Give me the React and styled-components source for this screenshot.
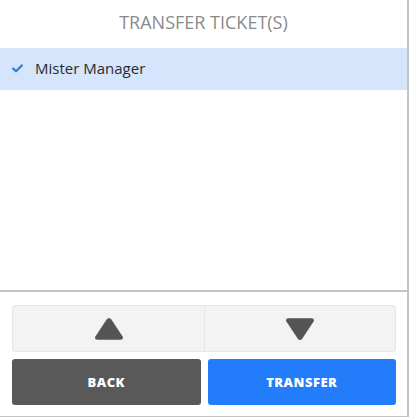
import { styled, createGlobalStyle } from "styled-components";

const GlobalStyle = createGlobalStyle`
   html, body {
      margin: 0;
      padding: 0;
      background: #fff;
   }
   * {
      box-sizing: border-box;
   }
`;

const Panel = styled.div`
   width: 409px;
   height: 417px;
   display: flex;
   flex-direction: column;
   border-right: 2px solid #c4c4c4;
   border-bottom: 1px solid #c4c4c4;
   font-family: "Open Sans", "Liberation Sans", sans-serif;
   background: #fff;
`;

const Title = styled.div`
   height: 48px;
   display: flex;
   align-items: center;
   justify-content: center;
   padding-bottom: 4px;
   font-size: 18px;
   color: #8a8a8a;
`;

const List = styled.ul`
   flex: 1;
   margin: 0;
   padding: 0;
   list-style: none;
`;

const Row = styled.li`
   height: 42px;
   display: flex;
   align-items: center;
   gap: 12px;
   padding-left: 12px;
   padding-bottom: 2px;
   font-size: 15px;
   color: #2b2b2b;
   background: ${(p) => (p.$selected ? "#d5e5fb" : "transparent")};
`;

const Footer = styled.div`
   border-top: 2px solid #c4c4c4;
   padding: 13px 11px 11px 12px;
   display: flex;
   flex-direction: column;
   gap: 7px;
`;

const ArrowGroup = styled.div`
   height: 47px;
   display: grid;
   grid-template-columns: 1fr 1fr;
   border: 1px solid #e6e6e6;
   border-radius: 3px;
   background: #f3f3f3;
`;

const ArrowButton = styled.button`
   border: none;
   background: transparent;
   display: flex;
   align-items: center;
   justify-content: center;
   padding: 0;
   cursor: pointer;

   & + & {
      border-left: 1px solid #e6e6e6;
   }
`;

const Actions = styled.div`
   display: grid;
   grid-template-columns: 1fr 1fr;
   gap: 7px;
`;

const ActionButton = styled.button`
   height: 46px;
   border: none;
   border-radius: 3px;
   background: ${(p) => (p.$primary ? "#237cfa" : "#595959")};
   color: #fff;
   font-family: inherit;
   font-size: 13px;
   font-weight: 800;
   letter-spacing: 0.5px;
   cursor: pointer;
`;

const Check = () => (
   <svg width="11" height="9" viewBox="0 0 11 9">
      <path d="M1.2 4.6 L4 7.3 L9.8 1.4" fill="none" stroke="#2a7de1" strokeWidth="2.2" strokeLinecap="round" strokeLinejoin="round" />
   </svg>
);

const Triangle = ({ down }) => (
   <svg width="30" height="24" viewBox="0 0 30 24" style={down ? { transform: "rotate(180deg)" } : undefined}>
      <path d="M12.6 2.4 Q15 -0.6 17.4 2.4 L28.6 19.4 Q30 22.8 26.6 22.8 L3.4 22.8 Q0 22.8 1.4 19.4 Z" fill="#555" />
   </svg>
);

const App = () => {
   const users = [{ id: 1, name: "Mister Manager", selected: true }];

   return (
      <>
         <GlobalStyle />
         <Panel>
            <Title>TRANSFER TICKET(S)</Title>
            <List>
               {users.map((u) => (
                  <Row key={u.id} $selected={u.selected}>
                     {u.selected && <Check />}
                     {u.name}
                  </Row>
               ))}
            </List>
            <Footer>
               <ArrowGroup>
                  <ArrowButton><Triangle /></ArrowButton>
                  <ArrowButton><Triangle down /></ArrowButton>
               </ArrowGroup>
               <Actions>
                  <ActionButton>BACK</ActionButton>
                  <ActionButton $primary>TRANSFER</ActionButton>
               </Actions>
            </Footer>
         </Panel>
      </>
   );
};

export default App;
